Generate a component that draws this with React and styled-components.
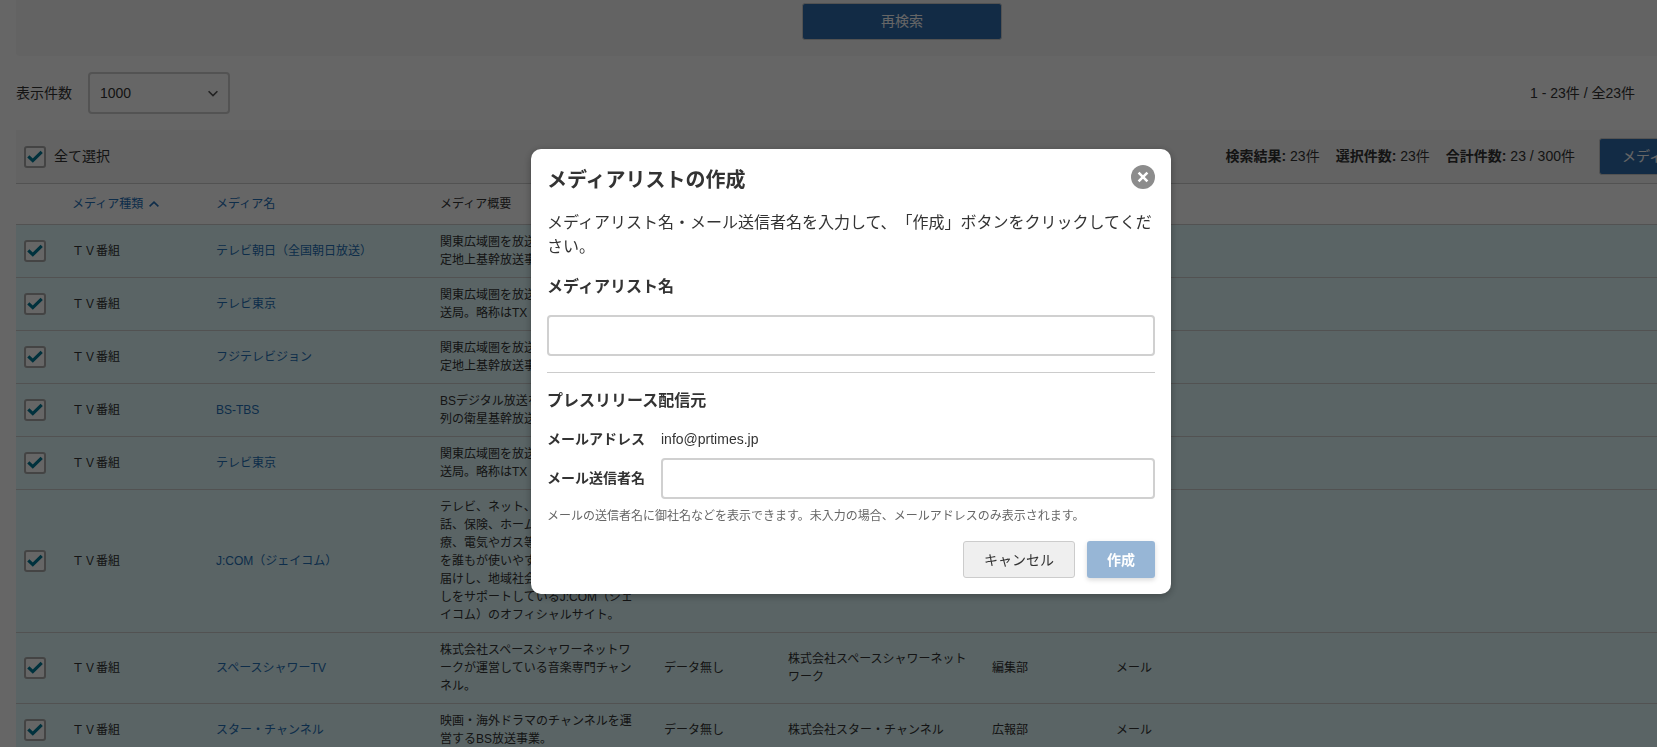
import React, { useState } from 'react';
import styled, { createGlobalStyle } from 'styled-components';

const initialRows = [
    { id: 1, name: 'テレビ朝日（全国朝日放送）', summary: '関東広域圏を放送対象地域とした特定地上基幹放送事業者。', company: '株式会社テレビ朝日', section: '編成部' },
    { id: 2, name: 'テレビ東京', summary: '関東広域圏を放送対象地域とする放送局。略称はTX', company: '株式会社テレビ東京', section: '報道局' },
    { id: 3, name: 'フジテレビジョン', summary: '関東広域圏を放送対象地域とした特定地上基幹放送事業者。', company: '株式会社フジテレビジョン', section: '報道局' },
    { id: 4, name: 'BS-TBS', summary: 'BSデジタル放送を行っているTBS系列の衛星基幹放送事業者。', company: '株式会社BS-TBS', section: '編成部' },
    { id: 5, name: 'テレビ東京', summary: '関東広域圏を放送対象地域とする放送局。略称はTX', company: '株式会社テレビ東京', section: '編成部' },
    { id: 6, name: 'J:COM（ジェイコム）', summary: 'テレビ、ネット、モバイル、固定電話、保険、ホームセキュリティ、医療、電気やガス等生活サービス全般を誰もが使いやすい形でお客様にお届けし、地域社会とお客さまの暮らしをサポートしているJ:COM（ジェイコム）のオフィシャルサイト。', company: 'JCOM株式会社', section: '広報部' },
    { id: 7, name: 'スペースシャワーTV', summary: '株式会社スペースシャワーネットワークが運営している音楽専門チャンネル。', company: '株式会社スペースシャワーネットワーク', section: '編集部' },
    { id: 8, name: 'スター・チャンネル', summary: '映画・海外ドラマのチャンネルを運営するBS放送事業。', company: '株式会社スター・チャンネル', section: '広報部' },
];

function CheckBox({ label, hiddenLabel, checked, onChange }) {
    return (
        <CheckLabel>
            <CheckFrame>
                <input type="checkbox" checked={checked} onChange={onChange} aria-label={hiddenLabel} />
                {checked && (
                    <svg width="22" height="22" viewBox="0 0 22 22" aria-hidden="true">
                        <path d="M4.3 10.4 8.8 14.6 17.7 5.9" fill="none" stroke="#007c99" strokeWidth="3.2" />
                    </svg>
                )}
            </CheckFrame>
            {label}
        </CheckLabel>
    );
}

function MediaTable({ selected, onToggle }) {
    return (
        <Table>
            <colgroup>
                <Col $width={48} />
                <Col $width={144} />
                <Col $width={224} />
                <Col $width={224} />
                <Col $width={124} />
                <Col $width={204} />
                <Col $width={124} />
                <col />
            </colgroup>
            <thead>
                <tr>
                    <th />
                    <th>
                        <SortLink href="#type">
                            メディア種類
                            <svg width="10" height="6" viewBox="0 0 10 6" aria-hidden="true">
                                <path d="M0.6 5.4 5 1.2 9.4 5.4" fill="none" stroke="currentColor" strokeWidth="1.6" />
                            </svg>
                        </SortLink>
                    </th>
                    <th><SortLink href="#name">メディア名</SortLink></th>
                    <th>メディア概要</th>
                    <th>発行部数</th>
                    <th>会社名</th>
                    <th>部署名</th>
                    <th>配信</th>
                </tr>
            </thead>
            <tbody>
                {initialRows.map((row) => (
                    <Row key={row.id} $selected={selected.includes(row.id)}>
                        <td>
                            <CheckBox
                                hiddenLabel={row.name}
                                checked={selected.includes(row.id)}
                                onChange={() => onToggle(row.id)}
                            />
                        </td>
                        <td>ＴＶ番組</td>
                        <td><a href={`#media-${row.id}`}>{row.name}</a></td>
                        <td>{row.summary}</td>
                        <td>データ無し</td>
                        <td>{row.company}</td>
                        <td>{row.section}</td>
                        <td>メール</td>
                    </Row>
                ))}
            </tbody>
        </Table>
    );
}

function CreateListModal({ onClose }) {
    const [listName, setListName] = useState('');
    const [sender, setSender] = useState('');

    return (
        <Overlay>
            <Modal role="dialog" aria-modal="true" aria-labelledby="modal-title">
                <ModalHeader>
                    <h2 id="modal-title">メディアリストの作成</h2>
                    <CloseButton type="button" aria-label="閉じる" onClick={onClose}>
                        <svg width="24" height="24" viewBox="0 0 24 24" aria-hidden="true">
                            <circle cx="12" cy="12" r="12" fill="#8c8c8c" />
                            <path d="M7.6 7.6 16.4 16.4M16.4 7.6 7.6 16.4" stroke="#fff" strokeWidth="2.6" />
                        </svg>
                    </CloseButton>
                </ModalHeader>
                <Lead>メディアリスト名・メール送信者名を入力して、「作成」ボタンをクリックしてください。</Lead>
                <Heading as="label" htmlFor="list-name">メディアリスト名</Heading>
                <TextInput id="list-name" value={listName} onChange={(e) => setListName(e.target.value)} />
                <Divider />
                <Heading>プレスリリース配信元</Heading>
                <SenderFields>
                    <FieldRow>
                        <FieldName as="span">メールアドレス</FieldName>
                        <span>info@prtimes.jp</span>
                    </FieldRow>
                    <FieldRow>
                        <FieldName htmlFor="sender">メール送信者名</FieldName>
                        <TextInput id="sender" value={sender} onChange={(e) => setSender(e.target.value)} />
                    </FieldRow>
                    <Note>メールの送信者名に御社名などを表示できます。未入力の場合、メールアドレスのみ表示されます。</Note>
                </SenderFields>
                <ModalFooter>
                    <CancelButton type="button" onClick={onClose}>キャンセル</CancelButton>
                    <SubmitButton type="button" disabled={!listName}>作成</SubmitButton>
                </ModalFooter>
            </Modal>
        </Overlay>
    );
}

function App() {
    const [selected, setSelected] = useState(initialRows.map((row) => row.id));
    const [showModal, setShowModal] = useState(true);
    const [perPage, setPerPage] = useState('1000');

    const allSelected = selected.length === initialRows.length;

    const handleToggleAll = () => {
        setSelected(allSelected ? [] : initialRows.map((row) => row.id));
    };

    const handleToggle = (id) => {
        setSelected(selected.includes(id) ? selected.filter((s) => s !== id) : [...selected, id]);
    };

    return (
        <Page lang="ja">
            <GlobalStyle />
            <Content>
                <SearchPanel>
                    <SearchButton type="button">再検索</SearchButton>
                </SearchPanel>
                <ListControl>
                    <label htmlFor="per-page">表示件数</label>
                    <SelectFrame>
                        <select id="per-page" value={perPage} onChange={(e) => setPerPage(e.target.value)}>
                            <option>100</option>
                            <option>500</option>
                            <option>1000</option>
                        </select>
                        <svg width="10" height="7" viewBox="0 0 10 7" aria-hidden="true">
                            <path d="M0.6 1.2 5 5.6 9.4 1.2" fill="none" stroke="#555" strokeWidth="1.6" />
                        </svg>
                    </SelectFrame>
                    <PageRange>1 - 23件 / 全23件</PageRange>
                </ListControl>
                <Toolbar>
                    <CheckBox label="全て選択" checked={allSelected} onChange={handleToggleAll} />
                    <Counts>
                        <span><b>検索結果:</b> 23件</span>
                        <span><b>選択件数:</b> 23件</span>
                        <span><b>合計件数:</b> 23 / 300件</span>
                    </Counts>
                    <PrimaryButton type="button" onClick={() => setShowModal(true)}>メディアリストの作成</PrimaryButton>
                </Toolbar>
                <MediaTable selected={selected} onToggle={handleToggle} />
            </Content>
            {showModal && <CreateListModal onClose={() => setShowModal(false)} />}
        </Page>
    );
}

const GlobalStyle = createGlobalStyle`
  * {
    box-sizing: border-box;
  }

  body {
    margin: 0;
    background-color: #fff;
    color: #333;
    font-family: "Liberation Sans", "Noto Sans CJK JP", sans-serif;
    font-size: 14px;
    line-height: 21px;
  }

  button, input, select {
    font: inherit;
    color: inherit;
  }

  h2, h3, p {
    margin: 0;
  }

  a {
    color: #2470b8;
    text-decoration: none;
  }
`;

const Page = styled.div`
  height: 100vh;
  overflow: hidden;
`;

/* the list is wider than the window and runs off to the right */
const Content = styled.main`
  margin: 0 -131px 0 16px;
`;

const SearchPanel = styled.div`
  display: flex;
  justify-content: center;
  padding: 3px 16px 16px;
  border-radius: 0 0 4px 4px;
  background-color: #f7f7f7;
`;

const PrimaryButton = styled.button`
  height: 37px;
  padding: 0 22px;
  border: 1px solid #ccc;
  border-radius: 3px;
  background-color: #2f6dad;
  color: #fff;
  cursor: pointer;
`;

const SearchButton = styled(PrimaryButton)`
  width: 200px;
`;

const ListControl = styled.div`
  display: flex;
  align-items: center;
  gap: 16px;
  padding: 16px 153px 16px 0;
`;

const SelectFrame = styled.div`
  display: grid;
  align-items: center;
  width: 142px;

  select, svg {
    grid-area: 1 / 1;
  }

  select {
    appearance: none;
    height: 42px;
    padding: 0 10px;
    border: 2px solid #d0d0d0;
    border-radius: 4px;
    background-color: #fff;
  }

  svg {
    justify-self: end;
    margin-right: 12px;
    pointer-events: none;
  }
`;

const PageRange = styled.span`
  margin-left: auto;
`;

const Toolbar = styled.div`
  display: flex;
  align-items: center;
  padding: 8px 4px 8px 8px;
  border-bottom: 1px solid #ccc;
  background-color: #f7f7f7;
`;

const Counts = styled.div`
  display: flex;
  gap: 16px;
  margin: 0 24px 0 auto;
`;

const CheckLabel = styled.label`
  display: flex;
  align-items: center;
  gap: 8px;
  cursor: pointer;
`;

const CheckFrame = styled.span`
  display: grid;

  input, svg {
    grid-area: 1 / 1;
  }

  input {
    appearance: none;
    width: 22px;
    height: 22px;
    margin: 0;
    border: 2px solid #aaa;
    border-radius: 3px;
    background-color: #fff;
  }

  svg {
    pointer-events: none;
  }
`;

const Table = styled.table`
  width: 100%;
  table-layout: fixed;
  border-collapse: separate;
  border-spacing: 0;
  font-size: 12px;
  line-height: 18px;

  th, td {
    padding: 8px 16px 8px 8px;
    border-bottom: 1px solid #ccc;
    text-align: left;
    font-weight: normal;
    word-break: break-all;
  }

  th {
    line-height: 24px;
  }
`;

const Col = styled.col`
  width: ${({ $width }) => $width}px;
`;

const SortLink = styled.a`
  display: flex;
  align-items: center;
  gap: 6px;
`;

const Row = styled.tr`
  background-color: ${({ $selected }) => ($selected ? '#e0fafc' : '#fff')};
`;

const Overlay = styled.div`
  position: fixed;
  inset: 0;
  display: flex;
  justify-content: center;
  align-items: center;
  padding: 0 0 4px 45px;
  background-color: rgba(0, 0, 0, 0.6);
`;

const Modal = styled.div`
  display: flex;
  flex-direction: column;
  gap: 16px;
  width: 640px;
  padding: 16px;
  border-radius: 10px;
  background-color: #fff;
  box-shadow: 0 2px 8px rgba(0, 0, 0, 0.3);
  font-size: 16px;
  line-height: 24px;
`;

const ModalHeader = styled.div`
  display: flex;
  justify-content: space-between;
  align-items: flex-start;

  h2 {
    font-size: 20px;
    line-height: 30px;
  }
`;

const CloseButton = styled.button`
  display: flex;
  padding: 0;
  border: none;
  border-radius: 50%;
  background: none;
  cursor: pointer;
`;

const Lead = styled.p`
  text-spacing-trim: space-all;
`;

const Heading = styled.h3`
  font-size: 16px;
  font-weight: bold;
`;

const TextInput = styled.input`
  width: 100%;
  height: 41px;
  padding: 0 10px;
  border: 2px solid #d0d0d0;
  border-radius: 4px;
  background-color: #fff;
`;

const Divider = styled.hr`
  width: 100%;
  margin: 0;
  border: none;
  border-top: 1px solid #ccc;
`;

const SenderFields = styled.div`
  display: flex;
  flex-direction: column;
  gap: 8px;
  font-size: 14px;
  line-height: 21px;
`;

const FieldRow = styled.div`
  display: flex;
  align-items: center;
  gap: 16px;
`;

const FieldName = styled.label`
  flex: none;
  font-weight: bold;
`;

const Note = styled.p`
  color: #666;
  font-size: 12px;
  line-height: 18px;
`;

const ModalFooter = styled.div`
  display: flex;
  justify-content: flex-end;
  gap: 12px;
`;

const CancelButton = styled.button`
  height: 37px;
  padding: 0 20px;
  border: 1px solid #ccc;
  border-radius: 3px;
  background-color: #efefef;
  font-size: 14px;
  cursor: pointer;
`;

const SubmitButton = styled.button`
  height: 37px;
  padding: 0 20px;
  border: none;
  border-radius: 3px;
  background-color: #2f6dad;
  box-shadow: 0 2px 5px rgba(0, 0, 0, 0.3);
  color: #fff;
  font-size: 14px;
  font-weight: bold;
  cursor: pointer;

  &:disabled {
    background-color: #97b6d6;
    box-shadow: 0 2px 5px rgba(0, 0, 0, 0.15);
    cursor: default;
  }
`;

export default App;
